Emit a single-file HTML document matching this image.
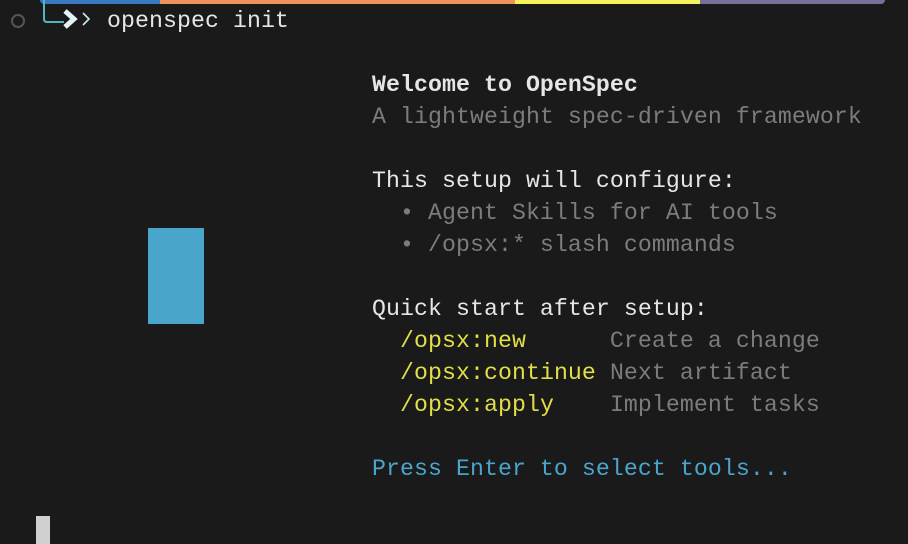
<!DOCTYPE html>
<html><head><meta charset="utf-8"><style>
html,body{margin:0;padding:0;background:#1a1a1a;width:908px;height:544px;overflow:hidden;position:relative}
.t{position:absolute;font-family:"Liberation Mono",monospace;font-size:23.2px;letter-spacing:0.08px;line-height:32px;white-space:pre;color:#e6e6e6}
.g{color:#7c7c7c}.y{color:#e3de48}.c{color:#4aa5cc}.b{font-weight:bold}
</style></head><body>
<div style="position:absolute;left:40px;top:0;width:120px;height:4px;background:#3a78c0;border-radius:0 0 0 4px"></div>
<div style="position:absolute;left:160px;top:0;width:355px;height:4px;background:#f0935a"></div>
<div style="position:absolute;left:515px;top:0;width:185px;height:4px;background:#f6f25e"></div>
<div style="position:absolute;left:700px;top:0;width:185px;height:4px;background:#7a6f9a;border-radius:0 0 4px 0"></div>
<div style="position:absolute;left:11px;top:14px;width:10px;height:10px;border:2px solid #555;border-radius:50%"></div>
<svg style="position:absolute;left:40px;top:0" width="60" height="34"><path d="M4 0V19Q4 22 7 22H24" fill="none" stroke="#4fb7bf" stroke-width="2"/><path d="M25 11L34 19L25 27" fill="none" stroke="#e6f4fa" stroke-width="5" stroke-linejoin="miter"/><path d="M43 13L49 19L43 25" fill="none" stroke="#cfe8f4" stroke-width="1.6"/></svg>
<div class="t" style="left:107px;top:5px">openspec init</div>
<div style="position:absolute;left:148px;top:228px;width:56px;height:96px;background:#4aa5cc"></div>
<div style="position:absolute;left:36px;top:516px;width:14px;height:28px;background:#d0d0d0"></div>
<div class="t" style="left:372px;top:69px"><span class="b">Welcome to OpenSpec</span>
<span class="g">A lightweight spec-driven framework</span>

This setup will configure:
<span class="g">  • Agent Skills for AI tools</span>
<span class="g">  • /opsx:* slash commands</span>

Quick start after setup:
  <span class="y">/opsx:new</span>      <span class="g">Create a change</span>
  <span class="y">/opsx:continue</span> <span class="g">Next artifact</span>
  <span class="y">/opsx:apply</span>    <span class="g">Implement tasks</span>

<span class="c">Press Enter to select tools...</span></div>
</body></html>
